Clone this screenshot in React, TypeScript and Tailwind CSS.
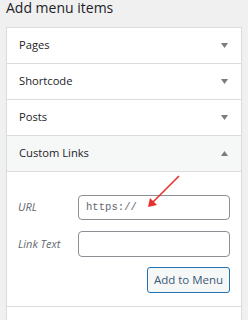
const Caret = ({ up }: { up?: boolean }) => (
  <svg width="7" height="5" viewBox="0 0 7 5" className="shrink-0">
    {up ? <path d="M0 5 L3.5 0 L7 5 Z" fill="#787c82" /> : <path d="M0 0 L7 0 L3.5 5 Z" fill="#787c82" />}
  </svg>
);

const Row = ({ label, open }: { label: string; open?: boolean }) => (
  <div
    className={`flex h-[36px] items-center justify-between border-b border-[#dcdcde] pl-[12px] pr-[13px] text-[11.2px] text-[#1d2327] ${
      open ? "bg-[#f6f7f7]" : "bg-white"
    }`}
  >
    <span>{label}</span>
    <Caret up={open} />
  </div>
);

const App = () => {
  return (
    <div className="relative h-[320px] w-[248px] overflow-hidden bg-[#f0f0f1] px-[6px] font-['Open_Sans',sans-serif]">
      <h2 className="h-[27px] text-[14px] leading-[15px] text-[#1d2327]">Add menu items</h2>
      <div className="border border-[#dcdcde] bg-white">
        <Row label="Pages" />
        <Row label="Shortcode" />
        <Row label="Posts" />
        <Row label="Custom Links" open />
        <div className="border-b border-[#dcdcde] pb-[13px] pl-[11px] pr-[11px] pt-[23px]">
          <div className="flex items-center">
            <label className="w-[60px] text-[11px] italic text-[#646970]">URL</label>
            <div className="flex h-[25px] w-[152px] items-center rounded-[4px] border border-[#8c8f94] px-[7px] font-['Liberation_Mono',monospace] text-[10.6px] text-[#646970]">
              https://
            </div>
          </div>
          <div className="mt-[11px] flex items-center">
            <label className="w-[60px] text-[11px] italic text-[#646970]">Link Text</label>
            <div className="h-[26px] w-[152px] rounded-[4px] border border-[#8c8f94]" />
          </div>
          <div className="mt-[10px] flex justify-end">
            <button className="h-[26px] w-[83px] rounded-[3px] border border-[#2271b1] bg-[#f6f7f7] text-[11.5px] text-[#3a5a78]">
              Add to Menu
            </button>
          </div>
        </div>
        <div className="h-[40px] bg-white" />
      </div>
      <svg className="absolute left-0 top-0" width="248" height="320">
        <line x1="179" y1="176" x2="152" y2="203" stroke="#e8302a" strokeWidth="1.6" />
        <path d="M148 207 L150 198 L157 205 Z" fill="#e8302a" />
      </svg>
    </div>
  );
};

export default App;
